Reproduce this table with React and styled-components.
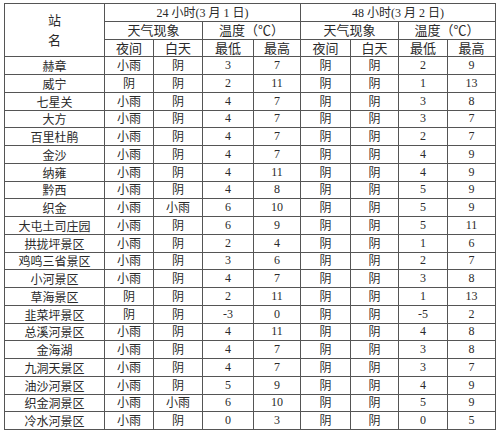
import React from "react";
import styled, { createGlobalStyle } from "styled-components";

const GlobalStyle = createGlobalStyle`
  html, body {
    margin: 0;
    padding: 0;
    background: #ffffff;
  }
`;

const Page = styled.div`
  padding: 3px 0 0 4px;
  width: 500px;
  height: 437px;
  box-sizing: border-box;
  font-family: "Liberation Serif", "Noto Sans CJK SC", serif;
  color: #2a2a2a;
`;

const Table = styled.table`
  border-collapse: collapse;
  width: 491px;
  table-layout: fixed;
  border: 1px solid #333;
`;

const Row = styled.tr`
  height: 17.75px;
`;

const Cell = styled.td`
  border: 1px solid #555;
  padding: 0;
  height: 16.75px;
  line-height: 13px;
  text-align: center;
  vertical-align: middle;
  font-size: ${(p) => (p.big ? "13px" : "12px")};
  white-space: nowrap;
  overflow: hidden;
`;

const StationHead = styled(Cell)`
  font-size: 13px;
  line-height: 19px;
`;

const Name = styled(Cell)`
  font-family: "Noto Sans CJK SC", sans-serif;
  font-size: 12px;
`;

const Cn = styled.span`
  font-family: "Noto Sans CJK SC", sans-serif;
`;

const rows = [
  ["赫章", "小雨", "阴", "3", "7", "阴", "阴", "2", "9"],
  ["威宁", "阴", "阴", "2", "11", "阴", "阴", "1", "13"],
  ["七星关", "小雨", "阴", "4", "7", "阴", "阴", "3", "8"],
  ["大方", "小雨", "阴", "4", "7", "阴", "阴", "3", "7"],
  ["百里杜鹃", "小雨", "阴", "4", "7", "阴", "阴", "2", "7"],
  ["金沙", "小雨", "阴", "4", "7", "阴", "阴", "4", "9"],
  ["纳雍", "小雨", "阴", "4", "11", "阴", "阴", "4", "9"],
  ["黔西", "小雨", "阴", "4", "8", "阴", "阴", "5", "9"],
  ["织金", "小雨", "小雨", "6", "10", "阴", "阴", "5", "9"],
  ["大屯土司庄园", "小雨", "阴", "6", "9", "阴", "阴", "5", "11"],
  ["拱拢坪景区", "小雨", "阴", "2", "4", "阴", "阴", "1", "6"],
  ["鸡鸣三省景区", "小雨", "阴", "3", "6", "阴", "阴", "2", "7"],
  ["小河景区", "小雨", "阴", "4", "7", "阴", "阴", "3", "8"],
  ["草海景区", "阴", "阴", "2", "11", "阴", "阴", "1", "13"],
  ["韭菜坪景区", "阴", "阴", "-3", "0", "阴", "阴", "-5", "2"],
  ["总溪河景区", "小雨", "阴", "4", "11", "阴", "阴", "4", "8"],
  ["金海湖", "小雨", "阴", "4", "7", "阴", "阴", "3", "8"],
  ["九洞天景区", "小雨", "阴", "4", "7", "阴", "阴", "3", "7"],
  ["油沙河景区", "小雨", "阴", "5", "9", "阴", "阴", "4", "9"],
  ["织金洞景区", "小雨", "小雨", "6", "10", "阴", "阴", "5", "9"],
  ["冷水河景区", "小雨", "阴", "0", "3", "阴", "阴", "0", "5"],
];

const isNum = (v) => /^-?\d+$/.test(v);

export default function App() {
  return (
    <>
      <GlobalStyle />
      <Page>
        <Table>
          <colgroup>
            <col style={{ width: 100 }} />
            <col style={{ width: 49 }} />
            <col style={{ width: 49 }} />
            <col style={{ width: 51 }} />
            <col style={{ width: 47 }} />
            <col style={{ width: 50 }} />
            <col style={{ width: 48 }} />
            <col style={{ width: 49 }} />
            <col style={{ width: 48 }} />
          </colgroup>
          <tbody>
            <Row>
              <StationHead rowSpan={3}>
                <Cn>站</Cn>
                <br />
                <Cn>名</Cn>
              </StationHead>
              <Cell colSpan={4}>
                24 <Cn>小时</Cn>(3 <Cn>月</Cn> 1 <Cn>日</Cn>)
              </Cell>
              <Cell colSpan={4}>
                48 <Cn>小时</Cn>(3 <Cn>月</Cn> 2 <Cn>日</Cn>)
              </Cell>
            </Row>
            <Row>
              <Cell big colSpan={2}><Cn>天气现象</Cn></Cell>
              <Cell big colSpan={2}><Cn>温度（℃）</Cn></Cell>
              <Cell big colSpan={2}><Cn>天气现象</Cn></Cell>
              <Cell big colSpan={2}><Cn>温度（℃）</Cn></Cell>
            </Row>
            <Row>
              {["夜间", "白天", "最低", "最高", "夜间", "白天", "最低", "最高"].map((t, i) => (
                <Cell big key={i}><Cn>{t}</Cn></Cell>
              ))}
            </Row>
            {rows.map((r) => (
              <Row key={r[0]}>
                <Name>{r[0]}</Name>
                {r.slice(1).map((v, i) => (
                  <Cell key={i}>{isNum(v) ? v : <Cn>{v}</Cn>}</Cell>
                ))}
              </Row>
            ))}
          </tbody>
        </Table>
      </Page>
    </>
  );
}
